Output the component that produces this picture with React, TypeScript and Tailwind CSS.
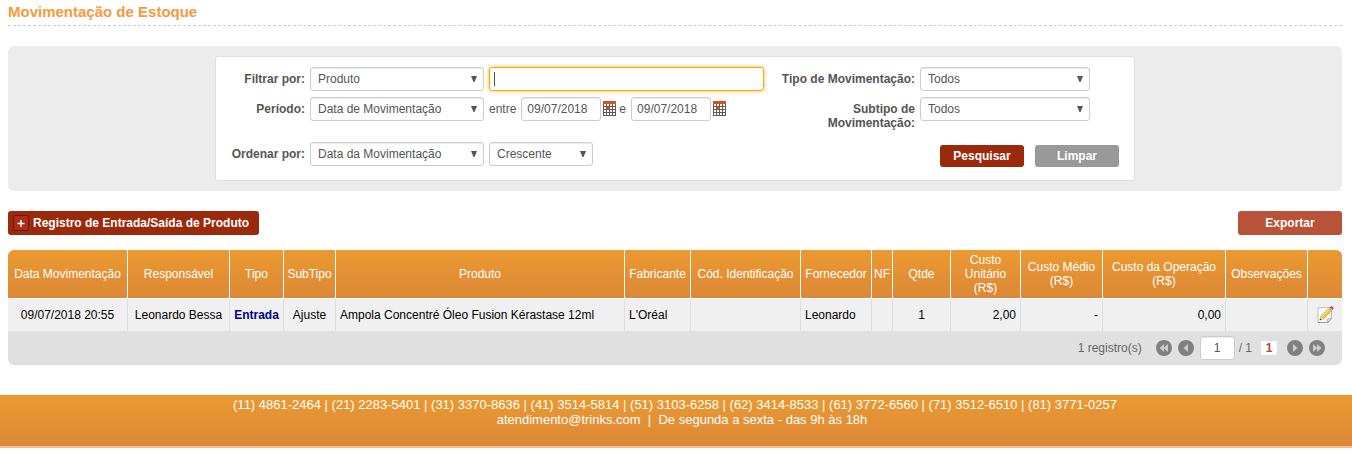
import { ReactNode, SelectHTMLAttributes } from 'react';

const columns = [
  { title: 'Data Movimentação', width: 'w-[120px]' },
  { title: 'Responsável', width: 'w-[102px]' },
  { title: 'Tipo', width: 'w-[54px]' },
  { title: 'SubTipo', width: 'w-[52px]' },
  { title: 'Produto', width: '' },
  { title: 'Fabricante', width: 'w-[66px]' },
  { title: 'Cód. Identificação', width: 'w-[110px]' },
  { title: 'Fornecedor', width: 'w-[71px]' },
  { title: 'NF', width: 'w-[21px]' },
  { title: 'Qtde', width: 'w-[58px]' },
  { title: 'Custo Unitário (R$)', width: 'w-[70px]' },
  { title: 'Custo Médio (R$)', width: 'w-[82px]' },
  { title: 'Custo da Operação (R$)', width: 'w-[123px]' },
  { title: 'Observações', width: 'w-[82px]' },
  { title: '', width: 'w-[34px]' },
];

const fieldStyle =
  'h-6 rounded-[3px] border border-[#ccc] bg-white text-xs text-[#555] shadow-[inset_0_1px_1px_rgba(0,0,0,0.08)] outline-none';

function Select({
  option,
  className,
  ...rest
}: { option: string; className: string } & SelectHTMLAttributes<HTMLSelectElement>) {
  return (
    <div className={`relative flex-none ${className}`}>
      <select {...rest} className={`${fieldStyle} block w-full appearance-none pr-5 pl-[7px]`}>
        <option>{option}</option>
      </select>
      <svg viewBox="0 0 6 6" className="pointer-events-none absolute top-[9px] right-[7px] size-[6px]" aria-hidden="true">
        <path d="M0 0h6L3.500 6h-1z" fill="#555" />
      </svg>
    </div>
  );
}

function CalendarIcon() {
  return (
    <svg viewBox="0 0 13 15" width="13" height="15" aria-hidden="true">
      <path d="M0 0h13v3H0z" fill="#dd4f16" />
      <path d="M0 3h13v12H0z" fill="#5a5a5a" />
      <path
        d="M1 3h2v2H1zM4 3h2v2H4zM7 3h2v2H7zM10 3h2v2h-2zM1 6h2v2H1zM7 6h2v2H7zM10 6h2v2h-2zM1 9h2v2H1zM4 9h2v2H4zM7 9h2v2H7zM10 9h2v2h-2zM1 12h2v2H1zM4 12h2v2H4zM7 12h2v2H7zM10 12h2v2h-2z"
        fill="#fff"
      />
      <path d="M4 6h2v2H4z" fill="#e8501a" />
      <path d="M3 6h1v2H3zM6 6h1v2H6zM4 5h2v1H4zM4 8h2v1H4z" fill="#a8502e" />
    </svg>
  );
}

function EditIcon() {
  return (
    <svg viewBox="0 0 17 18" width="17" height="18" aria-hidden="true">
      <path d="M1 1.500h13.500v11l-4 4H1z" fill="#f8f8f8" stroke="#c0c0c0" />
      <path d="M1 16.500h10l3.500-4" fill="none" stroke="#999" />
      <path d="M10.500 16.500v-3.500l4-.5z" fill="#ddd" stroke="#999" strokeWidth=".6" />
      <path d="M3 14l1-3.500L12 2.500l2.500 2.300-8 8z" fill="#f3c22e" stroke="#b98a1c" strokeWidth=".6" />
      <path d="M4.500 11.500l8-8" stroke="#fff09a" />
      <path d="M3 14l1-3.500 2.500 2.300z" fill="#e8cfa0" />
      <path d="M2.700 14.300l.5-1.600 1.100 1z" fill="#222" />
      <path d="M12 2.500l1-1 2.600 2.300-1.100 1z" fill="#aaa" />
      <path d="M13 1.500l1.200-1.200q2.800 0 2.300 2.500l-.9 1z" fill="#e63b45" />
    </svg>
  );
}

function PagerButton({ label, d }: { label: string; d: string }) {
  return (
    <button type="button" aria-label={label} className="size-4">
      <svg viewBox="0 0 16 16" className="size-4" aria-hidden="true">
        <circle cx="8" cy="8" r="8" fill="#808080" />
        <path d={d} fill="#ccc" />
      </svg>
    </button>
  );
}

function Label({ htmlFor, className, children }: { htmlFor: string; className: string; children: ReactNode }) {
  return (
    <label htmlFor={htmlFor} className={`flex-none pt-[5px] text-right leading-[14px] font-bold ${className}`}>
      {children}
    </label>
  );
}

function DateField({ id, label }: { id: string; label: string }) {
  return (
    <>
      <label htmlFor={id} className="leading-6">{label}</label>
      <input id={id} type="text" defaultValue="09/07/2018" className={`${fieldStyle} ml-[5px] w-20 px-[5px]`} />
      <button type="button" aria-label="Abrir calendário" className="mt-1 mr-[3px] ml-[2px]">
        <CalendarIcon />
      </button>
    </>
  );
}

function Filters() {
  return (
    <section className="mt-5 rounded-md bg-[#ececec] px-2 py-[10px]">
      <form className="mx-auto max-w-[920px] rounded-[3px] border border-[#dfdfdf] bg-white pt-[10px] pr-[15px] pb-[13px]">
        <div className="flex">
          <Label htmlFor="filtro" className="w-[89px]">Filtrar por:</Label>
          <Select id="filtro" option="Produto" className="ml-[5px] w-[174px]" />
          <div className="relative ml-[5px] w-[275px]">
            <input
              type="text"
              aria-label="Texto do filtro"
              className="peer block h-6 w-full rounded-[3px] border border-[#ffa500] px-1 text-xs text-[#555] shadow-[0_0_4px_rgba(255,165,0,0.7)] outline-none"
            />
            <span className="pointer-events-none absolute top-[5px] left-[5px] h-[14px] w-px bg-[#555] peer-focus:hidden" />
          </div>
          <Label htmlFor="tipo" className="ml-auto w-36">Tipo de Movimentação:</Label>
          <Select id="tipo" option="Todos" className="mr-[29px] ml-[5px] w-[170px]" />
        </div>
        <div className="mt-[6px] flex items-start">
          <Label htmlFor="periodo" className="w-[89px]">Período:</Label>
          <Select id="periodo" option="Data de Movimentação" className="mr-[5px] ml-[5px] w-[174px]" />
          <DateField id="inicio" label="entre" />
          <DateField id="fim" label="e" />
          <Label htmlFor="subtipo" className="ml-auto w-[110px]">Subtipo de Movimentação:</Label>
          <Select id="subtipo" option="Todos" className="mr-[29px] ml-[5px] w-[170px]" />
        </div>
        <div className="mt-[12px] flex items-start">
          <Label htmlFor="ordem" className="w-[89px]">Ordenar por:</Label>
          <Select id="ordem" option="Data da Movimentação" className="ml-[5px] w-[174px]" />
          <Select aria-label="Direção" option="Crescente" className="ml-[5px] w-[104px]" />
          <div className="mt-[3px] ml-auto flex gap-[11px]">
            <button type="submit" className="h-[22px] w-[84px] rounded-[3px] bg-[#9b290c] font-bold text-white">Pesquisar</button>
            <button type="reset" className="h-[22px] w-[84px] rounded-[3px] bg-[#999] font-bold text-white">Limpar</button>
          </div>
        </div>
      </form>
    </section>
  );
}

function Movements() {
  return (
    <section className="mt-[15px] overflow-hidden rounded-md bg-[#e0e0e0]">
      <table className="w-full table-fixed border-separate border-spacing-0 leading-[14px]">
        <thead>
          <tr className="bg-linear-to-b from-[#eb9a30] to-[#dc8737] text-white">
            {columns.map(({ title, width }) => (
              <th
                key={title}
                className={`${width} h-[49px] border-r border-b border-white px-[2px] font-normal last:border-r-0`}
              >
                {title}
              </th>
            ))}
          </tr>
        </thead>
        <tbody>
          <tr className="bg-[#f0f0f0] text-center text-black [&>td]:h-8 [&>td]:border-r [&>td]:border-[#ddd] [&>td:last-child]:border-r-0">
            <td>09/07/2018 20:55</td>
            <td>Leonardo Bessa</td>
            <td className="font-bold text-[#00008b]">Entrada</td>
            <td>Ajuste</td>
            <td className="pl-1 text-left">Ampola Concentré Óleo Fusion Kérastase 12ml</td>
            <td className="pl-1 text-left">L'Oréal</td>
            <td />
            <td className="pl-1 text-left">Leonardo</td>
            <td />
            <td>1</td>
            <td className="pr-1 text-right">2,00</td>
            <td className="pr-1 text-right">-</td>
            <td className="pr-1 text-right">0,00</td>
            <td />
            <td>
              <button type="button" aria-label="Editar" className="block w-full">
                <span className="flex justify-center"><EditIcon /></span>
              </button>
            </td>
          </tr>
        </tbody>
      </table>
      <nav aria-label="Paginação" className="flex h-[34px] items-center justify-end pr-[17px] text-[#666]">
        <span className="mr-[14px]">1 registro(s)</span>
        <div className="flex items-center gap-[6px]">
          <PagerButton label="Primeira página" d="M8 4v8L3.500 8zM12 4v8L7.500 8z" />
          <PagerButton label="Página anterior" d="M10 4v8L5.500 8z" />
        </div>
        <input type="text" aria-label="Página" defaultValue="1" className={`${fieldStyle} ml-[6px] w-[35px] text-center`} />
        <span className="ml-1">/ 1</span>
        <a href="#" aria-current="page" className="mr-[10px] ml-[9px] w-4 rounded-[2px] bg-white text-center leading-[14px] font-bold text-[#b8442a]">1</a>
        <div className="flex items-center gap-[6px]">
          <PagerButton label="Próxima página" d="M6 4v8l4.500-4z" />
          <PagerButton label="Última página" d="M4 4v8l4.500-4zM8 4v8l4.500-4z" />
        </div>
      </nav>
    </section>
  );
}

export default function App() {
  return (
    <div className="bg-white font-['Liberation_Sans',Arial,sans-serif] text-xs text-[#555]">
      <main className="pr-[10px] pl-2">
        <h1 className="border-b border-dashed border-[#ccc] pt-[3px] pb-1 text-[15px] leading-[18px] font-bold text-[#f79a3b]">
          Movimentação de Estoque
        </h1>
        <Filters />
        <div className="mt-5 flex justify-between">
          <button type="button" className="flex h-6 items-center gap-1 rounded-[3px] bg-[#9b290c] pr-[10px] pl-[5px] font-bold text-white">
            <svg viewBox="0 0 16 16" width="16" height="16" aria-hidden="true">
              <rect x=".5" y=".5" width="15" height="15" rx="1" fill="#a92d1a" stroke="#6e1206" />
              <path d="M8 5v7M4.500 8.500h7" stroke="#fff" strokeWidth="1.500" />
            </svg>
            Registro de Entrada/Saída de Produto
          </button>
          <button type="button" className="h-6 w-[104px] rounded-[3px] bg-[#b85239] font-bold text-white">Exportar</button>
        </div>
        <Movements />
      </main>
      <footer className="mt-[30px] h-[53px] border-b-2 border-[#f0c08c] bg-linear-to-b from-[#eb9a30] to-[#dc8737] pt-[2px] pr-[2px] text-center text-[13px] leading-[15px] text-white">
        <p>
          (11) 4861-2464 | (21) 2283-5401 | (31) 3370-8636 | (41) 3514-5814 | (51) 3103-6258 | (62) 3414-8533 | (61) 3772-6560 | (71) 3512-6510 | (81) 3771-0257
        </p>
        <p className="pl-[14px]">
          <a href="mailto:atendimento@trinks.com">atendimento@trinks.com</a> &nbsp;|&nbsp; De segunda a sexta - das 9h às 18h
        </p>
      </footer>
    </div>
  );
}
